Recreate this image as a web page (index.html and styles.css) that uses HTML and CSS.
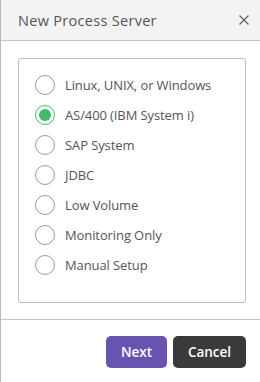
FILE: index.html
```html
<!DOCTYPE html>
<html lang="en">
<head>
  <meta charset="UTF-8" />
  <title>New Process Server</title>
  <link rel="stylesheet" href="styles.css">
</head>
<body>
  <div class="dialog">
    <header class="dialog-head">
      <h1>New Process Server</h1>
      <svg class="close" width="10" height="10" viewBox="0 0 10 10">
        <path d="M0.5 0.5L9.5 9.5M9.5 0.5L0.5 9.5" stroke="#666" stroke-width="1.3" fill="none"/>
      </svg>
    </header>

    <div class="dialog-body">
      <div class="choices">
        <label class="choice"><span class="radio"></span>Linux, UNIX, or Windows</label>
        <label class="choice"><span class="radio checked"></span>AS/400 (IBM System i)</label>
        <label class="choice"><span class="radio"></span>SAP System</label>
        <label class="choice"><span class="radio"></span>JDBC</label>
        <label class="choice"><span class="radio"></span>Low Volume</label>
        <label class="choice"><span class="radio"></span>Monitoring Only</label>
        <label class="choice"><span class="radio"></span>Manual Setup</label>
      </div>
    </div>

    <footer class="dialog-foot">
      <button class="btn next">Next</button>
      <button class="btn cancel">Cancel</button>
    </footer>
  </div>
</body>
</html>
```

FILE: styles.css
```css
body {
  margin: 0;
  font-family: "Open Sans", "Noto Sans", sans-serif;
  background: #fff;
  color: #555;
}
.dialog {
  width: 260px;
  height: 382px;
  border-left: 1px solid #bbb;
  box-sizing: border-box;
}
.dialog-head {
  display: flex;
  align-items: center;
  justify-content: space-between;
  height: 40px;
  padding: 0 11px 0 17px;
  background: #f3f3f3;
  border-bottom: 1px solid #c4c4c4;
}
.dialog-head h1 {
  margin: 0;
  font-size: 14.5px;
  font-weight: normal;
  color: #555;
  letter-spacing: 0.3px;
}
.dialog-body {
  padding: 17px 14px 16px 17px;
}
.choices {
  border: 1px solid #bdbdbd;
  border-radius: 3px;
  padding: 16px 0 27px 16px;
  display: flex;
  flex-direction: column;
  gap: 10px;
}
.choice {
  display: flex;
  align-items: center;
  gap: 10px;
  height: 20px;
  font-size: 13px;
  color: #555;
  letter-spacing: -0.1px;
}
.radio {
  width: 18px;
  height: 18px;
  border: 1px solid #9a9a9a;
  border-radius: 50%;
  background: #fff;
  display: flex;
  align-items: center;
  justify-content: center;
}
.radio.checked {
  border-color: #45b86a;
}
.radio.checked::after {
  content: "";
  width: 12px;
  height: 12px;
  border-radius: 50%;
  background: #45b86a;
}
.dialog-foot {
  border-top: 1px solid #c4c4c4;
  display: flex;
  justify-content: flex-end;
  gap: 6px;
  padding: 16px 14px 0 0;
}
.btn {
  height: 32px;
  border: none;
  border-radius: 5px;
  color: #fff;
  font-family: inherit;
  font-size: 13.5px;
  font-weight: 600;
  cursor: pointer;
}
.next {
  width: 61px;
  background: #6953b0;
}
.cancel {
  width: 73px;
  background: #3a3a3a;
}
```
